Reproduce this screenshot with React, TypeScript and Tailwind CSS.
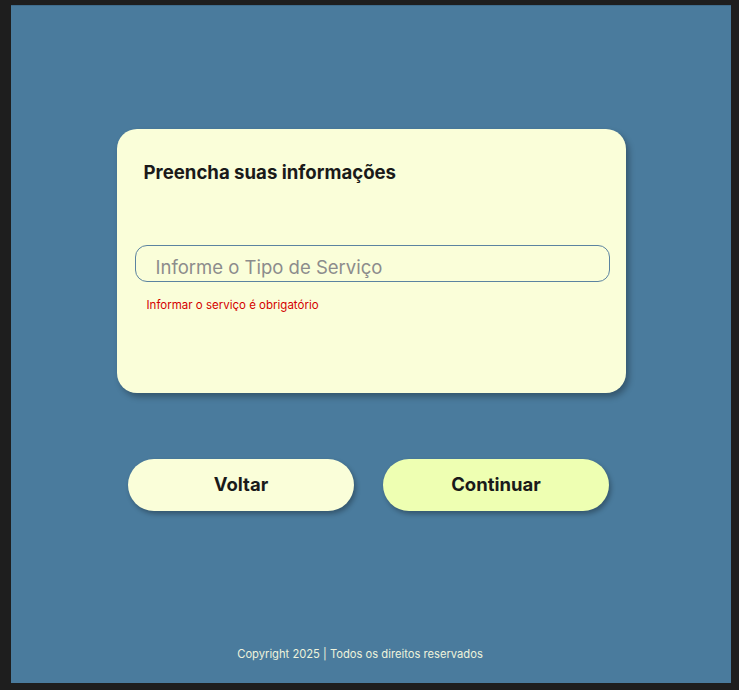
export default function App() {
  return (
    <div className="h-[690px] w-[739px] bg-[#1e1e1e] pl-[11px] pt-[5px] font-['Inter',sans-serif]">
      <div className="flex h-[678px] w-[720px] flex-col border-t border-[#3f6c8c] bg-[#4a7b9d]">
        <div className="mx-auto mt-[123px] h-[264px] w-[509px] rounded-[20px] bg-[#fafed9] pt-[29px] shadow-[3px_4px_6px_rgba(0,0,0,0.3)]">
          <h1 className="pl-[27px] text-[18.6px] leading-[28px] font-bold text-[#1a1a1a]">
            Preencha suas informações
          </h1>
          <input
            className="mt-[59px] ml-[18px] h-[37px] w-[475px] rounded-[12px] border border-[#5b83a0] bg-transparent pt-[6px] pl-[20px] text-[18.5px] text-[#333] placeholder:text-[#8c8c8c] outline-none"
            placeholder="Informe o Tipo de Serviço"
          />
          <p className="mt-[15px] pl-[30px] text-[11.5px] leading-[16px] text-[#d40000]">
            Informar o serviço é obrigatório
          </p>
        </div>
        <div className="mt-[66px] flex gap-[29px] pl-[117px]">
          <button className="h-[52px] w-[226px] rounded-[26px] bg-[#fafed9] text-[18.5px] font-bold text-[#1a1a1a] shadow-[2px_3px_5px_rgba(0,0,0,0.3)]">
            Voltar
          </button>
          <button className="h-[52px] w-[226px] rounded-[26px] bg-[#eeffb2] text-[18.5px] font-bold text-[#1a1a1a] shadow-[2px_3px_5px_rgba(0,0,0,0.3)]">
            Continuar
          </button>
        </div>
        <footer className="mt-[135px] pr-[22px] text-center text-[11.2px] leading-[16px] text-[#eef3dc]">
          Copyright 2025 | Todos os direitos reservados
        </footer>
      </div>
    </div>
  );
}
